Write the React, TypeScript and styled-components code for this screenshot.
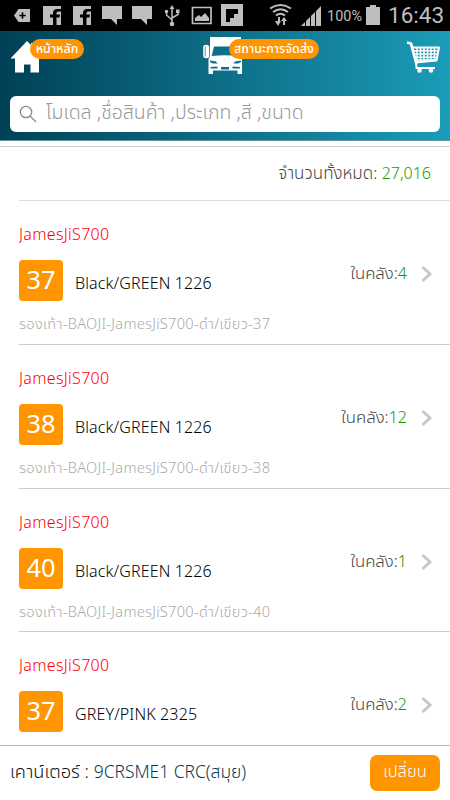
import React from "react";
import styled, { createGlobalStyle } from "styled-components";

const Global = createGlobalStyle`
  * { box-sizing: border-box; }
  body { margin: 0; background: #fff; font-family: "Noto Sans", "Noto Sans Thai", sans-serif; }
`;

const Screen = styled.div`
  width: 450px;
  height: 800px;
  overflow: hidden;
  display: flex;
  flex-direction: column;
  background: #fff;
`;

const StatusBar = styled.div`
  height: 31px;
  flex: none;
  background: #000;
  position: relative;
  color: #bebebe;
`;

const StatusGlyphs = styled.svg`
  display: block;
`;

const Battery = styled.span`
  position: absolute;
  left: 327px;
  top: 8px;
  font: 14.500px/17px Roboto, sans-serif;
`;

const Clock = styled.span`
  position: absolute;
  left: 388px;
  top: 2px;
  font: 22.500px/27px Roboto, sans-serif;
`;

const Header = styled.header`
  height: 110px;
  flex: none;
  background: linear-gradient(90deg, #004156 0%, #1b9cb8 100%);
  border-bottom: 1px solid #5b96a5;
`;

const Nav = styled.nav`
  height: 65px;
  position: relative;
`;

const NavIcon = styled.svg<{ $x: number; $y: number }>`
  position: absolute;
  left: ${(p) => p.$x}px;
  top: ${(p) => p.$y}px;
`;

const Pill = styled.span<{ $x: number; $w: number }>`
  position: absolute;
  left: ${(p) => p.$x}px;
  top: 8px;
  width: ${(p) => p.$w}px;
  height: 20px;
  border-radius: 10px;
  background: #ff9500;
  color: #fff;
  font-size: 12.500px;
  font-weight: 500;
  line-height: 19px;
  text-align: center;
  white-space: nowrap;
`;

const Search = styled.div`
  height: 36px;
  margin: 0 10px;
  border-radius: 6px;
  background: #fff;
  display: flex;
  align-items: center;
  padding-left: 9px;
  gap: 9px;
`;

const SearchText = styled.div`
  padding-bottom: 4px;
`;

const Text = styled.span<{ $size: number; $color: string; $ls?: number; $weight?: number }>`
  font-size: ${(p) => p.$size}px;
  color: ${(p) => p.$color};
  letter-spacing: ${(p) => p.$ls ?? 0}px;
  font-weight: ${(p) => p.$weight ?? 300};
  line-height: 24px;
  white-space: pre;
`;

const Total = styled.div`
  margin-top: 5px;
  border-top: 1px solid #ccc;
  height: 54px;
  flex: none;
  padding: 14px 19px 0 0;
  text-align: right;
`;

const List = styled.main`
  flex: 1;
  min-height: 0;
  overflow: hidden;
  margin-left: 19px;
`;

const Item = styled.article`
  height: 143.800px;
  border-top: 1px solid #ccc;
  padding-top: 21px;
  display: flex;
  flex-direction: column;
  &:first-child { border-top-color: #ddd; }
`;

const Line = styled.div`
  display: flex;
  height: 41px;
  margin: 14px 0 10px;
`;

const Size = styled.div`
  width: 44px;
  height: 41px;
  border-radius: 4px;
  background: #ff9500;
  text-align: center;
  padding-top: 7px;
`;

const Name = styled.div`
  flex: 1;
  padding: 11px 0 0 12px;
`;

const Stock = styled.div`
  display: flex;
  padding: 1px 18px 0 0;
  gap: 14px;
`;

const Chevron = styled.svg`
  margin-top: 4px;
`;

const Footer = styled.footer`
  height: 55px;
  flex: none;
  border-top: 1px solid #b5b5b5;
  display: flex;
  justify-content: space-between;
  padding: 9px 10px;
`;

const Counter = styled.div`
  padding-top: 4px;
`;

const Change = styled.button`
  width: 70px;
  height: 36px;
  border: 0;
  border-radius: 7px;
  background: #ff9500;
  padding: 0 0 5px;
  font-family: inherit;
`;

const items = [
  { size: "37", name: "Black/GREEN 1226", stock: "4" },
  { size: "38", name: "Black/GREEN 1226", stock: "12" },
  { size: "40", name: "Black/GREEN 1226", stock: "1" },
  { size: "37", name: "GREY/PINK 2325", stock: "2" },
];

const HomeIcon = () => (
  <NavIcon $x={10} $y={9} width="34" height="34" fill="#fff">
    <path d="M0.500 18.500L17 1L21 5V3H26V10L33 18.500H29V32.500H20.500V24.500H14V32.500H5V18.500Z" />
  </NavIcon>
);

const TruckIcon = () => (
  <NavIcon $x={203} $y={6} width="41" height="38" fill="#fff">
    <path
      fillRule="evenodd"
      d="M7 0H38V20L39 22V37H34.500V33.500H10V37H5.500V22L7 19ZM11 9.500L8.700 19Q22 17.500 36 19L34 9.500ZM7 23.500V25L10 26.500H14.500L13 24.500ZM38 23.500V25L35 26.500H30.500L32 24.500ZM7.500 30V31.500H14.500V29.500ZM18 30V32.500H26V30ZM29.500 29.500V31.500H37V30Z"
    />
    <rect x="1" y="8.500" width="4.500" height="12" rx="2" fill="none" stroke="#fff" strokeWidth="1.600" />
    <rect x="2.500" y="9" width="3" height="11" />
  </NavIcon>
);

const CartIcon = () => (
  <NavIcon $x={406} $y={9} width="34" height="35" fill="none" stroke="#fff">
    <path d="M1 2.500L5 3.500L10.500 24" strokeWidth="2.800" strokeLinejoin="round" />
    <path d="M6 7.500H33L30.500 20.500L9.500 22.500" strokeWidth="2" strokeLinejoin="round" />
    <path d="M7 10.800H32M8 14H31.500M9 17.200H31M10 20H30M11 8V22M14.500 8V22M18 8V22M21.500 8V22M25 8V21M28.500 8V21" strokeWidth="1.500" />
    <path d="M10 22L10.500 28H29" strokeWidth="1.900" />
    <circle cx="13.500" cy="30.500" r="2.300" fill="#fff" stroke="none" />
    <circle cx="25" cy="30.500" r="2.300" fill="#fff" stroke="none" />
  </NavIcon>
);

export default function App() {
  return (
    <Screen>
      <Global />
      <StatusBar>
        <StatusGlyphs width="450" height="31" fill="#bebebe">
          <path d="M14 15.500L18.500 9H30V22H18.500Z" />
          <path d="M22.500 12.300V18.700M19.300 15.500H25.700" stroke="#000" strokeWidth="1.600" />
          <path d="M43 6H61V9H57.500Q53 9 53 13V14.500H50V17.500H53V25H43ZM61 11.500V25H56.500V17.500H59.500L60 14.500H56.500V13Q56.500 11.500 58 11.500Z" />
          <path d="M73 6H91V9H87.500Q83 9 83 13V14.500H80V17.500H83V25H73ZM91 11.500V25H86.500V17.500H89.500L90 14.500H86.500V13Q86.500 11.500 88 11.500Z" />
          <path d="M102 6H122V19H117V25L111 19H102Z" />
          <path d="M132 6H152V19H147V25L141 19H132Z" />
          <path d="M172 7V24M166.500 12V15L172 20M178 11V14.500L172 18" stroke="#bebebe" strokeWidth="1.500" fill="none" />
          <path d="M169.500 9L172 5L174.500 9Z" /><circle cx="172" cy="24" r="2.300" /><circle cx="166.500" cy="11.500" r="1.800" /><path d="M176 9.500H179.500V13H176Z" />
          <path d="M192.500 7.500H211V23.500H192.500Z" fill="none" stroke="#bebebe" strokeWidth="1.700" />
          <path d="M195 21V18L199 15L201 17L205 13L209 18V21Z" />
          <path fillRule="evenodd" d="M221 4H243V26H221ZM226 9V22H230V18H234V14H238V9Z" />
          <path d="M270 8.500Q280.500 1.500 291 8.500M273 12Q280.500 6.500 288 12M276 15.500Q280.500 12 285 15.500" fill="none" stroke="#bebebe" strokeWidth="2" />
          <path d="M276 21H278V17H280V21H281L278 26L275 21ZM284 17L287 21H285V25H283V21H281Z" />
          <path d="M301 26L305 22V26ZM306 21L310 17V26H306ZM311 16L315 12V26H311ZM316 11L321 6V26H316Z" />
          <path d="M366 7H370V5H376V7H380V25H366Z" />
        </StatusGlyphs>
        <Battery>100%</Battery>
        <Clock>16:43</Clock>
      </StatusBar>
      <Header>
        <Nav>
          <HomeIcon />
          <TruckIcon />
          <CartIcon />
          <Pill $x={30} $w={54}>หน้าหลัก</Pill>
          <Pill $x={229} $w={90}>สถานะการจัดส่ง</Pill>
        </Nav>
        <Search>
          <svg width="18" height="18" fill="none" stroke="#888" strokeWidth="1.300"><circle cx="7" cy="7" r="5.700" /><path d="M11 11L17 17" /></svg>
          <SearchText><Text $size={19.5} $color="#999">โมเดล ,ชื่อสินค้า ,ประเภท ,สี ,ขนาด</Text></SearchText>
        </Search>
      </Header>
      <Total><Text $size={17} $color="#444">จำนวนทั้งหมด: </Text><Text $size={16} $color="#219b0b">27,016</Text></Total>
      <List>
        {items.map((it, i) => (
          <Item key={i}>
            <Text $size={16} $ls={0.3} $color="#f00">JamesJiS700</Text>
            <Line>
              <Size><Text $size={25.5} $color="#fff" $weight={400}>{it.size}</Text></Size>
              <Name><Text $size={16} $ls={0.13} $color="#000">{it.name}</Text></Name>
              <Stock>
                <div><Text $size={16.8} $color="#444">ในคลัง:</Text><Text $size={16} $color="#0f9600">{it.stock}</Text></div>
                <Chevron width="11" height="18" fill="none" stroke="#c7c7cc" strokeWidth="3"><path d="M1.500 2L9 9L1.500 16" /></Chevron>
              </Stock>
            </Line>
            <Text $size={14.6} $ls={0.29} $color="#aaa">รองเท้า-BAOJI-JamesJiS700-ดำ/เขียว-{it.size}</Text>
          </Item>
        ))}
      </List>
      <Footer>
        <Counter><Text $size={18.2} $color="#111">เคาน์เตอร์ : </Text><Text $size={17.4} $color="#073a55">9CRSME1 CRC(สมุย)</Text></Counter>
        <Change><Text $size={16.5} $color="#fff" $weight={300}>เปลี่ยน</Text></Change>
      </Footer>
    </Screen>
  );
}
